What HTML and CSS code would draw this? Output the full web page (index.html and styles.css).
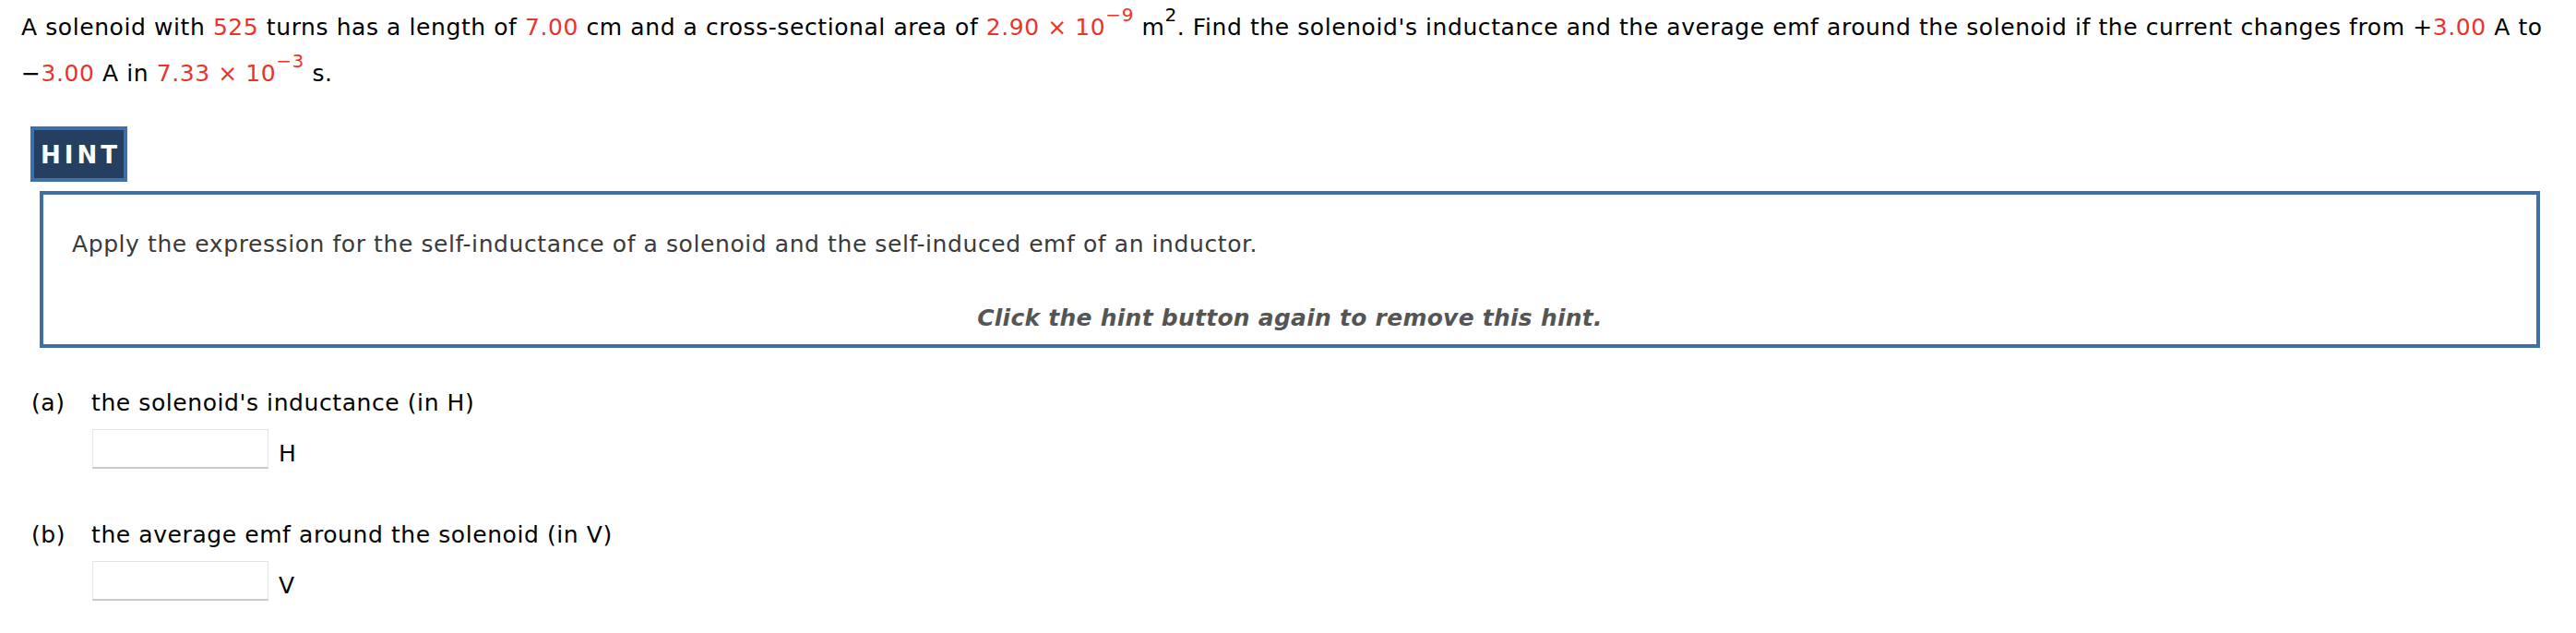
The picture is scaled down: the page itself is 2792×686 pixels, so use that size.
FILE: index.html
```
<!DOCTYPE html>
<html lang="en">
<head>
<meta charset="utf-8">
<title>Solenoid inductance</title>
<link rel="stylesheet" href="styles.css">
</head>
<body>
<div class="page">
  <p class="question">A solenoid with <span class="num">525</span> turns has a length of <span class="num">7.00</span> cm and a cross-sectional area of <span class="num">2.90 × 10<sup>−9</sup></span> m<sup>2</sup>. Find the solenoid's inductance and the average emf around the solenoid if the current changes from +<span class="num">3.00</span> A to <span class="sign">−</span><span class="num">3.00</span> A in <span class="num">7.33 × 10<sup>−3</sup></span> s.</p>

  <button class="hint-btn" type="button">HINT</button>

  <div class="hint-box">
    <p class="hint-text">Apply the expression for the self-inductance of a solenoid and the self-induced emf of an inductor.</p>
    <p class="hint-remove">Click the hint button again to remove this hint.</p>
  </div>

  <div class="part part-a">
    <span class="part-label">(a)</span>
    <div class="part-body">
      <div class="part-q">the solenoid's inductance (in H)</div>
      <div class="answer">
        <input class="answer-input" type="text" aria-label="inductance">
        <span class="unit">H</span>
      </div>
    </div>
  </div>

  <div class="part part-b">
    <span class="part-label">(b)</span>
    <div class="part-body">
      <div class="part-q">the average emf around the solenoid (in V)</div>
      <div class="answer">
        <input class="answer-input" type="text" aria-label="average emf">
        <span class="unit">V</span>
      </div>
    </div>
  </div>
</div>
</body>
</html>
```

FILE: styles.css
```
html, body {
  margin: 0;
  padding: 0;
  background: #ffffff;
}

body {
  font-family: "DejaVu Sans", Verdana, sans-serif;
  font-size: 25px;
  letter-spacing: 0.58px;
  color: #000000;
}

.page {
  padding: 5px 19px 0 23px;
}

.question {
  margin: 0;
  line-height: 50px;
}

.num {
  color: #e8352b;
}

.sign {
  color: #000000;
}

sup {
  font-size: 20px;
  line-height: 0;
  vertical-align: 15px;
}

.hint-btn {
  display: block;
  box-sizing: border-box;
  width: 105px;
  height: 60px;
  margin: 32px 0 0 10px;
  padding: 2px 0 0 4px;
  border: 4px solid #3f6fa8;
  background: #243f5f;
  color: #ffffff;
  font-family: "DejaVu Sans", Verdana, sans-serif;
  font-weight: bold;
  font-size: 26px;
  letter-spacing: 4px;
  line-height: 50px;
  text-align: center;
}

.hint-box {
  margin: 10px 20px 0 20px;
  border: 4px solid #3f6fa8;
  padding: 39px 31px 14px;
}

.hint-text {
  margin: 0;
  line-height: 29px;
  color: #3a3a3a;
}

.hint-remove {
  margin: 51px 0 0;
  line-height: 29px;
  text-align: center;
  font-weight: bold;
  font-style: italic;
  letter-spacing: 0.25px;
  color: #555555;
}

.part {
  display: grid;
  grid-template-columns: 65px 1fr;
  margin-left: 11px;
  line-height: 29px;
}

.part-a {
  margin-top: 45px;
}

.part-b {
  margin-top: 57px;
}

.answer {
  display: flex;
  align-items: center;
  gap: 11px;
  margin-top: 14px;
}

.answer-input {
  box-sizing: border-box;
  width: 191px;
  height: 43px;
  margin: 0 0 0 1px;
  border: 1px solid #e4e4e4;
  border-bottom: 2px solid #c9c9c9;
  background: #ffffff;
}

.unit {
  padding-top: 10px;
}
```
